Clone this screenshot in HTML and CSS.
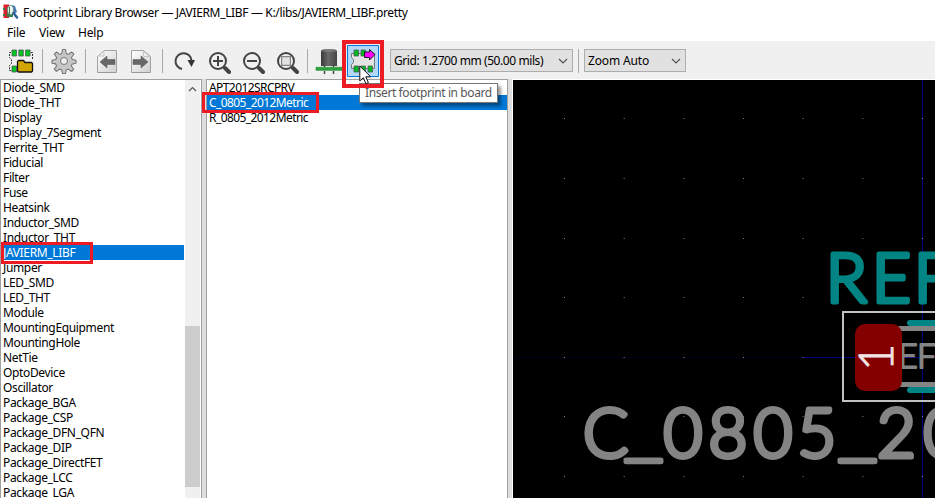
FILE: index.html
```html
<!DOCTYPE html>
<html lang="en">
<head>
<meta charset="utf-8">
<title>Footprint Library Browser</title>
<link rel="stylesheet" href="styles.css">
</head>
<body>
<div class="window">
  <header class="titlebar">
    <svg class="app-icon" width="16" height="16" viewBox="0 0 16 16">
      <path fill="#d9232b" d="M.5.500H6V14H.500z"/>
      <path fill="#35804a" d="M0 4h2v2H0zM0 10h2v2H0zM4 3h6v10H4z"/>
      <path fill="#4579b8" d="M9 1l3 1 2 6-3 2z"/>
      <ellipse cx="7.500" cy="6" rx="3" ry="4.500" fill="#e9f6ec" stroke="#718783"/>
      <path fill="none" stroke="#35804a" d="M6.500 3v7"/>
      <path stroke="#295f9c" stroke-width="2.500" stroke-linecap="round" d="M10.500 9l3.500 4.500"/>
    </svg>
    <span class="title-text">Footprint Library Browser — JAVIERM_LIBF — K:/libs/JAVIERM_LIBF.pretty</span>
  </header>
  <nav class="menubar"><span class="m-file">File</span><span class="m-view">View</span><span class="m-help">Help</span></nav>
  <div class="toolbar">
    <svg class="tools" width="384" height="38" viewBox="0 41 384 38">
      <defs>
        <linearGradient id="page" x2="1" y2="1"><stop stop-color="#fff"/><stop offset="1" stop-color="#cfcfcf"/></linearGradient>
        <linearGradient id="can"><stop stop-color="#393939"/><stop offset=".45" stop-color="#696969"/><stop offset="1" stop-color="#444"/></linearGradient>
      </defs>
      <path stroke="#a9a9a9" d="M42.500 49v24M85.500 49v24M162.500 49v24M307.500 49v24"/>
      <g>
        <path fill="none" stroke="#333" stroke-dasharray="2 1" d="M11 52.500H9.500v5l2 2v4l-2 2v5H12M31 52.500h1.500V60"/>
        <path fill="#00c722" stroke="#555" stroke-width=".8" d="M12 50h4.500v6H12zM18.800 50h4.500v6h-4.500zM25.600 50h4.500v6h-4.500zM12 66h4.500v6H12z"/>
        <path fill="#d2a600" stroke="#111" stroke-width="1.300" stroke-linejoin="round" d="M17.500 61.500l1-1h5l1.500 2h6.500l1 1v7.500l-1 1h-13l-1-1z"/>
      </g>
      <g transform="translate(64 61)">
        <path fill="#c7c7c7" stroke="#777" stroke-width="1.100" stroke-linejoin="round" d="M-1.500-11.500h3l.8 4 2 .9 3.300-2.400 2.200 2.200-2.400 3.300.9 2 3.700.7v3l-3.800.8-.9 2 2.400 3.300-2.200 2.200-3.300-2.400-2 .9-.7 3.500h-3l-.8-3.600-2-.9-3.300 2.400-2.200-2.200 2.400-3.300-.9-2-3.700-.7v-3l3.800-.7.9-2-2.400-3.300 2.200-2.200 3.300 2.400 2-.9z"/>
        <circle r="3.500" fill="#eee" stroke="#777"/>
      </g>
      <g>
        <path fill="url(#page)" stroke="#a2a2a2" d="M104.500 50.500h12v22h-19v-16z"/>
        <path fill="#eee" stroke="#b5b5b5" stroke-width=".7" d="M98 56h6v-5z"/>
        <path fill="#676767" stroke="#555" stroke-width=".5" d="M100 62l7-6v3.500h8v5h-8V68z"/>
        <path stroke="#999" d="M98 72.500h18"/>
      </g>
      <g>
        <path fill="url(#page)" stroke="#a2a2a2" d="M131.500 50.500h12l7 6v16h-19z"/>
        <path fill="#eee" stroke="#b5b5b5" stroke-width=".7" d="M143.500 51v5.500h6z"/>
        <path fill="#676767" stroke="#555" stroke-width=".5" d="M148 62l-7-6v3.500h-8v5h8V68z"/>
        <path stroke="#999" d="M132 72.500h18"/>
      </g>
      <path fill="none" stroke="#444" stroke-width="2" d="M182 69a8 8 0 1 1 9.500-8.500"/>
      <path fill="#333" d="M187.500 60h7.500l-3.500 7z"/>
      <g fill="none" stroke="#444" stroke-width="2">
        <path stroke-width="4" stroke-linecap="round" d="M225 68l4 4M259 68l4 4M293 68l4 4"/>
        <circle cx="218" cy="61" r="8"/><circle cx="252" cy="61" r="8"/><circle cx="286" cy="61" r="8"/>
        <path d="M213 61h10M218 56v10M247 61h10"/>
        <path fill="#e2e2e2" stroke="#858585" stroke-width="1.200" d="M281.600 56.600h8.800v8.800h-8.800z"/>
      </g>
      <path fill="url(#can)" d="M321 51q0-2 8-2t8 2v15h-16z"/>
      <path fill="#a7a7a7" d="M321 50.500q0-1.500 8-1.500t8 1.500-8 1.500-8-1.500z" opacity=".35"/>
      <path fill="#2fa440" stroke="#10882c" stroke-width=".6" d="M316 67.300h27v3h-27z"/>
      <path stroke="#444" stroke-width="1.500" d="M324.500 65v2M333.500 65v2M324.500 71v3M333.500 71v3"/>
      <path fill="#b3d8f7" stroke="#0078d7" d="M347.500 45.500h31v31h-31z"/>
      <path fill="#e4e4e4" stroke="#777" d="M351.500 53.500h23v15h-23v-4l2-2v-3l-2-2z"/>
      <path fill="#00bc23" stroke="#555" stroke-width=".8" d="M354 50h4.500v6H354zM361 50h4.500v6H361zM354 66h4.500v6H354zM361 66h4.500v6H361zM368 66h4.500v6H368z"/>
      <path fill="#f0f" stroke="#171717" d="M364.500 52h5v-2.500l5.500 5-5.500 5.500v-2.500h-5z"/>
    </svg>
    <div class="combo grid-combo"><span>Grid: 1.2700 mm (50.00 mils)</span><svg width="10" height="6" viewBox="0 0 10 6"><path d="M1 1l4 4 4-4"/></svg></div>
    <i class="separator"></i>
    <div class="combo zoom-combo"><span>Zoom Auto</span><svg width="10" height="6" viewBox="0 0 10 6"><path d="M1 1l4 4 4-4"/></svg></div>
  </div>
  <main class="panes">
    <section class="libraries">
      <ul>
        <li>Diode_SMD</li><li>Diode_THT</li><li>Display</li><li>Display_7Segment</li><li>Ferrite_THT</li><li>Fiducial</li><li>Filter</li><li>Fuse</li><li>Heatsink</li><li>Inductor_SMD</li><li>Inductor_THT</li><li class="selected">JAVIERM_LIBF</li><li>Jumper</li><li>LED_SMD</li><li>LED_THT</li><li>Module</li><li>MountingEquipment</li><li>MountingHole</li><li>NetTie</li><li>OptoDevice</li><li>Oscillator</li><li>Package_BGA</li><li>Package_CSP</li><li>Package_DFN_QFN</li><li>Package_DIP</li><li>Package_DirectFET</li><li>Package_LCC</li><li>Package_LGA</li>
      </ul>
      <div class="scrollbar"><svg width="9" height="6" viewBox="0 0 9 6"><path d="M1 5l3.500-3.500L8 5"/></svg><div class="thumb"></div></div>
    </section>
    <div class="splitter"></div>
    <section class="footprints">
      <ul><li>APT2012SRCPRV</li><li class="selected">C_0805_2012Metric</li><li>R_0805_2012Metric</li></ul>
    </section>
    <div class="splitter"></div>
    <section class="canvas">
      <svg width="422" height="418" viewBox="513 80 422 418">
        <path stroke="#000084" d="M513 357.500h290" opacity=".2"/>
        <path stroke="#000084" d="M803 357.500h132M922.500 80v418"/>
        <g fill="none" stroke="#848484" stroke-width="1" stroke-dasharray="1 58.660">
          <path d="M564 118.500h371M564 178.500h371M564 238.500h371M564 297.500h371M564 357.500h371M564 416.500h371M564 476.500h371"/>
        </g>
        <path fill="none" stroke="#c2c2c2" stroke-width="2" d="M940 312h-97v89h97"/>
        <path stroke="#008484" stroke-width="6" stroke-linecap="round" d="M910 323h30M910 390h30"/>
        <path stroke="#848484" stroke-width="5" d="M895 328.500h40M895 384.500h40"/>
        <text class="stroke-text ref-small" x="898 917" y="368">EF</text>
        <rect x="855" y="324" width="47" height="67" rx="10" fill="#840000"/>
        <text class="pad-number" transform="translate(893 371) rotate(-90)">1</text>
        <text class="stroke-text ref" x="826 872 914" y="302">REF</text>
        <text class="stroke-text value" y="456.500"><tspan x="583">C</tspan><tspan class="bar" x="624" y="452.500" textLength="39" lengthAdjust="spacingAndGlyphs">_</tspan><tspan x="663.500 708.500 753.500 797.500" y="456.500">0805</tspan><tspan class="bar" x="838" y="452.500" textLength="39" lengthAdjust="spacingAndGlyphs">_</tspan><tspan x="877 923.500" y="456.500">20</tspan></text>
      </svg>
    </section>
  </main>
  <div class="tooltip">Insert footprint in board</div>
  <div class="mark mark-tool"></div>
  <div class="mark mark-footprint"></div>
  <div class="mark mark-library"></div>
  <svg class="cursor" width="13" height="20" viewBox="0 0 13 20"><path fill="#fff" stroke="#111" d="M.8 1v15l3.500-3.300 2.600 6 2.500-1.100-2.600-5.800h4.900z"/></svg>
</div>
</body>
</html>
```
FILE: styles.css
```css
* { box-sizing: border-box; }
body { margin: 0; overflow: hidden; font: 12px/15px "Noto Sans", sans-serif; color: #000; }
.window { position: relative; width: 935px; height: 498px; background: #fff; display: flex; flex-direction: column; overflow: hidden; }
.titlebar { height: 24px; padding-left: 3px; display: flex; align-items: center; gap: 4px; white-space: nowrap; }
.title-text { letter-spacing: -.345px; }
.menubar { height: 17px; padding-left: 7px; display: flex; line-height: 17px; letter-spacing: -.2px; }
.m-file { width: 32px; }
.m-view { width: 39px; }
.toolbar { height: 38px; flex: none; background: #f0f0f0; display: flex; align-items: flex-start; }
.tools { flex: none; }
.combo { height: 23px; margin-top: 8px; border: 1px solid #adadad; background: #e1e1e1; display: flex; align-items: center; justify-content: space-between; padding: 0 4px 0 3px; white-space: nowrap; letter-spacing: -.15px; }
.combo path, .scrollbar path { fill: none; stroke: #555; stroke-width: 1.2; }
.grid-combo { width: 183px; margin-left: 6px; letter-spacing: -.42px; }
.zoom-combo { width: 102px; }
.separator { width: 1px; height: 24px; margin: 8px 5px; background: #a9a9a9; }
.panes { display: flex; height: 419px; flex: none; }
ul { list-style: none; margin: 0; padding: 0; flex: 1; }
li { height: 15px; padding-left: 2px; letter-spacing: -.35px; white-space: nowrap; }
.footprints li { letter-spacing: -.58px; }
.selected { background: #0078d7; color: #fff; }
.libraries { width: 202px; border: 1px solid #a0a0a0; border-bottom: 0; display: flex; overflow: hidden; }
.libraries ul { flex: none; width: 183px; }
.scrollbar { width: 15px; height: 418px; margin-left: 1px; padding-top: 6px; background: #f0f0f0; display: flex; flex-direction: column; align-items: center; }
.thumb { width: 15px; height: 161px; margin-top: 234px; background: #cdcdcd; }
.splitter { width: 4px; background: #dedede; }
.footprints { width: 302px; border: 1px solid #a0a0a0; border-bottom: 0; display: flex; }
.canvas { width: 423px; margin-left: auto; padding: 1px 0 0 1px; background: #fff; }
.canvas svg { display: block; background: #000; }
.stroke-text { font-family: Lato, sans-serif; font-weight: 300; stroke-linejoin: round; }
.ref, .value { font-size: 67px; stroke-width: 5px; }
.bar { stroke-width: 4.5px; }
.ref { fill: #008484; stroke: #008484; }
.value, .ref-small { fill: #848484; stroke: #848484; }
.ref-small { font-size: 34px; stroke-width: 2px; }
.pad-number { font: 300 47px Lato, sans-serif; fill: #f2e4e4; stroke: #f2e4e4; stroke-width: 1; }
.tooltip { position: absolute; left: 359px; top: 83px; width: 139px; height: 20px; border: 1px solid #767676; background: #fff; color: #575757; padding-left: 5px; line-height: 18px; letter-spacing: -.4px; white-space: nowrap; box-shadow: 3px 3px 3px rgba(0,0,0,.4); }
.mark { position: absolute; border: 3px solid #ed1c24; }
.mark-tool { left: 342px; top: 40px; width: 42px; height: 48px; border-width: 4px; }
.mark-footprint { left: 202px; top: 92px; width: 117px; height: 21px; }
.mark-library { left: 1px; top: 242px; width: 92px; height: 22px; }
.cursor { position: absolute; left: 359px; top: 65px; }
```
